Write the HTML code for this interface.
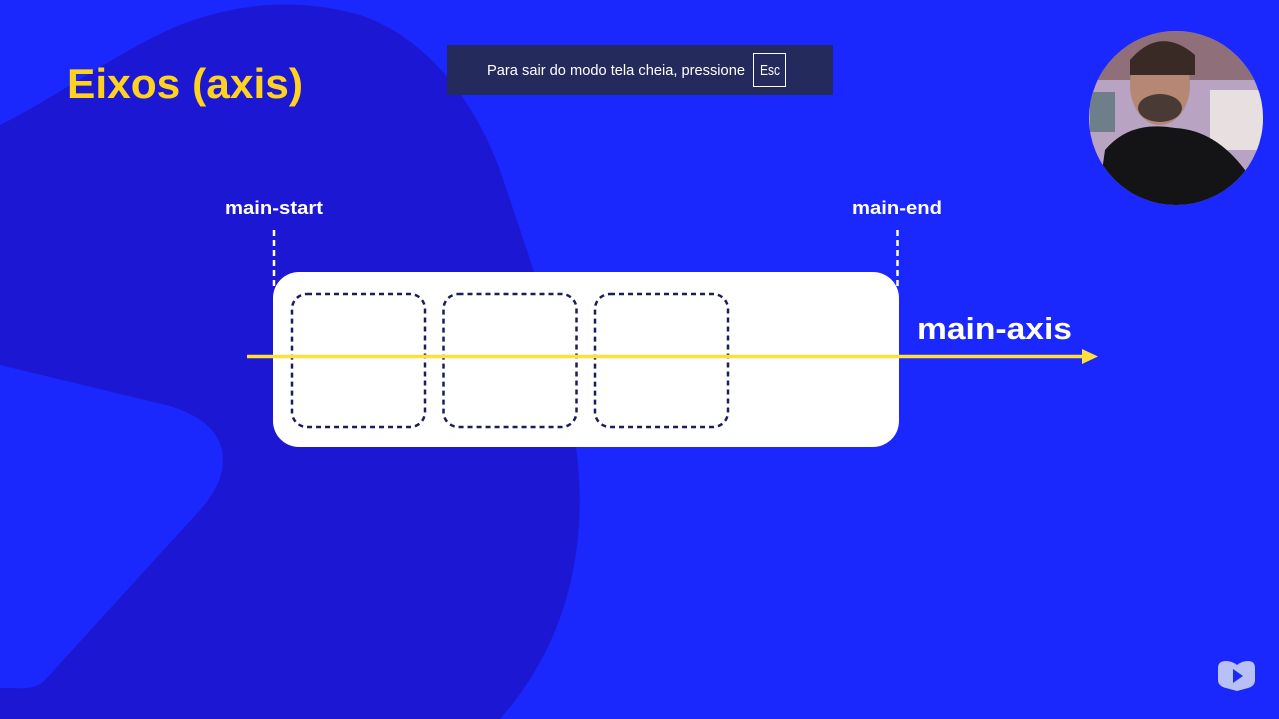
<!DOCTYPE html>
<html><head><meta charset="utf-8"><style>
html,body{margin:0;padding:0;width:1279px;height:719px;overflow:hidden;background:#1b28fd;}
svg{display:block}
</style></head><body>
<svg width="1279" height="719" viewBox="0 0 1279 719" xmlns="http://www.w3.org/2000/svg">
<rect width="1279" height="719" fill="#1b28fd"/>
<path d="M0,125 C60,95 120,50 180,25 C240,2 300,-2 360,15 C420,35 470,90 500,170 C530,260 560,340 575,440 C590,540 570,640 500,719 L0,719 Z" fill="#1c17d3"/>
<path d="M0,365 L170,406 Q230,425 222,470 Q218,490 200,510 L45,680 Q35,690 15,688 L0,688 Z" fill="#1b28fd"/>
<text x="67" y="98" font-family="Liberation Sans, sans-serif" font-weight="bold" font-size="42" fill="#ffd21f" textLength="236" lengthAdjust="spacingAndGlyphs">Eixos (axis)</text>
<text x="225" y="214" font-family="Liberation Sans, sans-serif" font-weight="bold" font-size="18" fill="#fff" textLength="98" lengthAdjust="spacingAndGlyphs">main-start</text>
<text x="852" y="214" font-family="Liberation Sans, sans-serif" font-weight="bold" font-size="18" fill="#fff" textLength="90" lengthAdjust="spacingAndGlyphs">main-end</text>
<line x1="274" y1="230" x2="274" y2="290" stroke="#fff" stroke-width="2.5" stroke-dasharray="6,4"/>
<line x1="897.5" y1="230" x2="897.5" y2="290" stroke="#fff" stroke-width="2.5" stroke-dasharray="6,4"/>
<rect x="273" y="272" width="626" height="175" rx="26" fill="#fff"/>
<g fill="none" stroke="#1a1c5c" stroke-width="2.5" stroke-dasharray="5,4">
<rect x="292" y="294" width="133" height="133" rx="15"/>
<rect x="443.5" y="294" width="133" height="133" rx="15"/>
<rect x="595" y="294" width="133" height="133" rx="15"/>
</g>
<line x1="247" y1="356.5" x2="1085" y2="356.5" stroke="#ffe03a" stroke-width="3.5"/>
<path d="M1082,349 L1098,356.5 L1082,364 Z" fill="#ffe03a"/>
<text x="917" y="339" font-family="Liberation Sans, sans-serif" font-weight="bold" font-size="31" fill="#fff" textLength="155" lengthAdjust="spacingAndGlyphs">main-axis</text>
<rect x="447" y="45" width="386" height="50" fill="#242a5c"/>
<text x="487" y="75" font-family="Liberation Sans, sans-serif" font-size="14.5" fill="#fff" textLength="258" lengthAdjust="spacingAndGlyphs">Para sair do modo tela cheia, pressione</text>
<rect x="753.5" y="53.5" width="32" height="33" fill="none" stroke="#fff" stroke-width="1"/>
<text x="760" y="75" font-family="Liberation Sans, sans-serif" font-size="14.5" fill="#fff" textLength="20" lengthAdjust="spacingAndGlyphs">Esc</text>
<defs><clipPath id="c"><circle cx="1176" cy="118" r="87"/></clipPath></defs>
<g clip-path="url(#c)">
<rect x="1080" y="20" width="200" height="200" fill="#b9a3c2"/>
<rect x="1080" y="20" width="200" height="60" fill="#8f6f7a"/>
<rect x="1210" y="90" width="60" height="60" fill="#e8e0e0"/>
<rect x="1090" y="92" width="25" height="40" fill="#6f7f8a"/>
<ellipse cx="1160" cy="85" rx="30" ry="40" fill="#b58874"/>
<path d="M1130,60 Q1160,25 1195,55 L1195,75 L1130,75 Z" fill="#3a2a25"/>
<path d="M1095,220 L1105,150 Q1130,120 1175,128 Q1215,130 1245,170 L1260,220 Z" fill="#141316"/>
<ellipse cx="1160" cy="108" rx="22" ry="14" fill="#4a3a35"/>
</g>
<path d="M1218,668 Q1218,661 1226,661 Q1232,661 1237,665 Q1242,661 1248,661 Q1255,661 1255,668 L1255,680 Q1255,686 1248,688 L1237,691 L1226,688 Q1218,686 1218,680 Z" fill="#b9c0f6"/>
<path d="M1233,669 L1243,676 L1233,683 Z" fill="#1b28fd"/>
</svg>
</body></html>
